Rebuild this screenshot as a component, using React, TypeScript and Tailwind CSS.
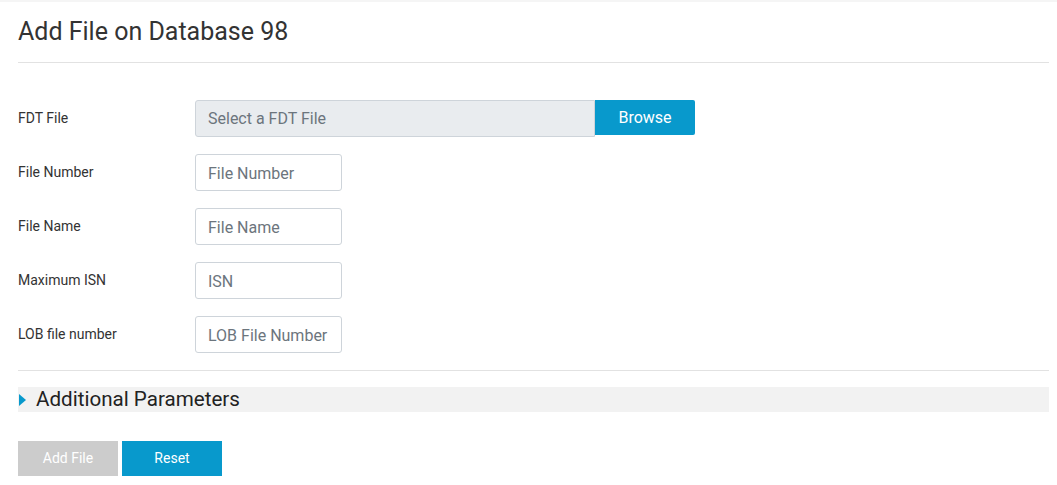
import React from 'react'

const font = { fontFamily: 'Roboto, "Liberation Sans", sans-serif' }

const fields = [
  { label: 'File Number', placeholder: 'File Number' },
  { label: 'File Name', placeholder: 'File Name' },
  { label: 'Maximum ISN', placeholder: 'ISN' },
  { label: 'LOB file number', placeholder: 'LOB File Number' },
]

export default function App() {
  return (
    <div className="min-h-[485px] bg-white text-[#333]" style={font}>
      <div className="h-[2px] bg-[#f5f5f5]" />
      <div className="pl-[18px] pr-[8px]">
        <h1 className="pt-[15px] pb-[15px] text-[25px] leading-[30px] text-[#333]">Add File on Database 98</h1>
        <div className="h-px bg-[#e2e2e2]" />

        <div className="pt-[37px] flex flex-col gap-[17px]">
          <div className="flex items-center">
            <label className="w-[177px] text-[14px] text-[#333]">FDT File</label>
            <div className="flex items-start">
              <div className="w-[400px] h-[37px] rounded-l-[3px] border border-[#ced4da] bg-[#e9ecef] px-3 pt-px flex items-center text-[16px] text-[#6c757d]">
                Select a FDT File
              </div>
              <button className="w-[100px] h-[35px] bg-[#0899cc] text-white text-[16px] rounded-r-[2px]">Browse</button>
            </div>
          </div>

          {fields.map((f) => (
            <div key={f.label} className="flex items-center">
              <label className="w-[177px] text-[14px] text-[#333]">{f.label}</label>
              <input
                placeholder={f.placeholder}
                className="w-[147px] h-[37px] rounded-[3px] border border-[#ced4da] bg-white px-3 pt-px text-[16px] placeholder:text-[#6c757d] outline-none"
                style={font}
              />
            </div>
          ))}
        </div>

        <div className="mt-[17px] h-px bg-[#e2e2e2]" />

        <div className="mt-[16px] h-[25px] bg-[#f2f2f2] flex items-center">
          <svg width="7" height="12" viewBox="0 0 7 12" className="ml-[1px]">
            <path d="M0 0 L7 6 L0 12 Z" fill="#0899cc" />
          </svg>
          <span className="ml-[10px] text-[20.6px] leading-[25px] text-[#222]">Additional Parameters</span>
        </div>

        <div className="mt-[29px] flex gap-[4px]">
          <button className="w-[100px] h-[35px] bg-[#cccccc] text-white text-[14px]">Add File</button>
          <button className="w-[100px] h-[35px] bg-[#0899cc] text-white text-[14px]">Reset</button>
        </div>
      </div>
    </div>
  )
}
